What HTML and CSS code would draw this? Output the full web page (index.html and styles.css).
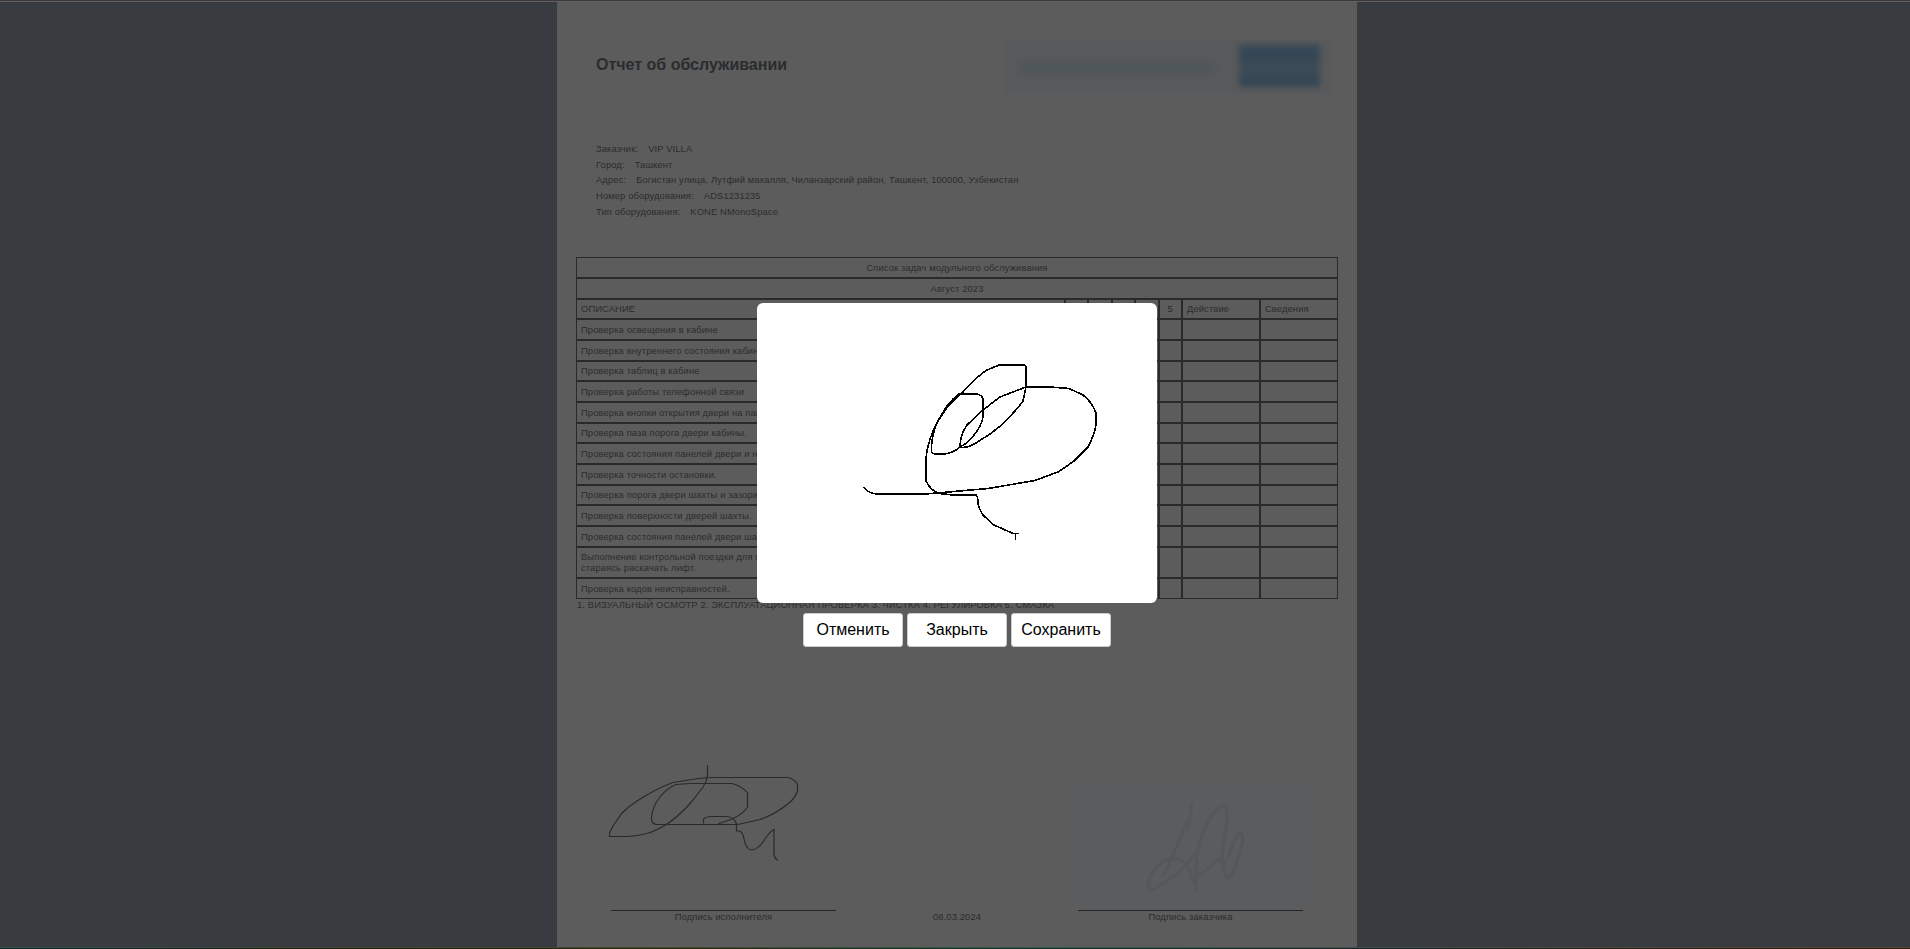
FILE: index.html
```html
<!DOCTYPE html>
<html lang="ru">
<head>
<meta charset="utf-8">
<title>Отчет об обслуживании</title>
<link rel="stylesheet" href="styles.css">
</head>
<body>
<main class="page">
  <header class="header">
    <h1 class="title">Отчет об обслуживании</h1>
    <div class="logo"><div class="logo-text"></div><div class="logo-mark"></div></div>
  </header>
  <section class="info">
    <p><span>Заказчик:</span><span>VIP VILLA</span></p>
    <p><span>Город:</span><span>Ташкент</span></p>
    <p><span>Адрес:</span><span>Богистан улица, Лутфий махалля, Чиланзарский район, Ташкент, 100000, Узбекистан</span></p>
    <p><span>Номер оборудования:</span><span>ADS1231235</span></p>
    <p><span>Тип оборудования:</span><span>KONE NMonoSpace</span></p>
  </section>
  <table class="tasks">
    <colgroup><col class="c-desc"><col class="c-n"><col class="c-n"><col class="c-n"><col class="c-n"><col class="c-n"><col class="c-act"><col class="c-act"></colgroup>
    <tr><td colspan="8" class="mid">Список задач модульного обслуживания</td></tr>
    <tr><td colspan="8" class="mid">Август 2023</td></tr>
    <tr><td>ОПИСАНИЕ</td><td class="mid">1</td><td class="mid">2</td><td class="mid">3</td><td class="mid">4</td><td class="mid">5</td><td>Действие</td><td>Сведения</td></tr>
    <tr><td>Проверка освещения в кабине</td><td></td><td></td><td></td><td></td><td></td><td></td><td></td></tr>
    <tr><td>Проверка внутреннего состояния кабины</td><td></td><td></td><td></td><td></td><td></td><td></td><td></td></tr>
    <tr><td>Проверка таблиц в кабине</td><td></td><td></td><td></td><td></td><td></td><td></td><td></td></tr>
    <tr><td>Проверка работы телефонной связи</td><td></td><td></td><td></td><td></td><td></td><td></td><td></td></tr>
    <tr><td>Проверка кнопки открытия двери на панели</td><td></td><td></td><td></td><td></td><td></td><td></td><td></td></tr>
    <tr><td>Проверка паза порога двери кабины.</td><td></td><td></td><td></td><td></td><td></td><td></td><td></td></tr>
    <tr><td>Проверка состояния панелей двери и направляющих</td><td></td><td></td><td></td><td></td><td></td><td></td><td></td></tr>
    <tr><td>Проверка точности остановки.</td><td></td><td></td><td></td><td></td><td></td><td></td><td></td></tr>
    <tr><td>Проверка порога двери шахты и зазора</td><td></td><td></td><td></td><td></td><td></td><td></td><td></td></tr>
    <tr><td>Проверка поверхности дверей шахты.</td><td></td><td></td><td></td><td></td><td></td><td></td><td></td></tr>
    <tr><td>Проверка состояния панелей двери шахты</td><td></td><td></td><td></td><td></td><td></td><td></td><td></td></tr>
    <tr class="tall"><td>Выполнение контрольной поездки для проверки<br>стараясь раскачать лифт.</td><td></td><td></td><td></td><td></td><td></td><td></td><td></td></tr>
    <tr><td>Проверка кодов неисправностей.</td><td></td><td></td><td></td><td></td><td></td><td></td><td></td></tr>
  </table>
  <p class="legend">1. ВИЗУАЛЬНЫЙ ОСМОТР 2. ЭКСПЛУАТАЦИОННАЯ ПРОВЕРКА 3. ЧИСТКА 4. РЕГУЛИРОВКА 5. СМАЗКА</p>
  <footer class="signs">
    <div class="sign">
      <svg class="sign-pic" width="225" height="120" viewBox="611 790 225 120">
        <path class="ink" d="M707.500 765V775Q707 781 703 787Q696 797 686 808Q676 818 667 824Q656 831 647 833.500Q637 836 628 836.500H609.500V833L613 826L622 813Q629 806 637 801Q657 788 673 782.500L698 778.500L712 777.500H788Q794 779 797.500 784V791Q795 798 789 803Q776 814 760 819.500L738 824.500H656Q651 823 651.500 818Q652 807 660 797Q667 788 676 784.500L690 783.500H732Q742 786 747.500 793V807Q743 814 732 819L718 824M703.500 823.500V819Q705 817 712 816.500H727Q734 817 736.500 824V831H740Q743 833 744 839Q746 849 751 850Q757 850 763 842Q769 832 774 829.500V855Q775 859 778 860.500"/>
      </svg>
      <div class="sign-label">Подпись исполнителя</div>
    </div>
    <div class="date">08.03.2024</div>
    <div class="sign">
      <svg class="sign-pic" width="225" height="120" viewBox="1078 790 225 120">
        <rect class="scan" x="1065" y="785" width="250" height="124"/>
        <path class="pencil" d="M1192 804Q1190 820 1187 832M1187 820Q1178 845 1163 877M1184 862Q1177 856 1164 861Q1149 871 1148 886Q1150 892 1156 888L1178 873Q1190 862 1195 853Q1199 861 1195 892M1184 862Q1191 869 1193 884M1195 880Q1195 835 1216 810Q1228 798 1227 820L1222 855L1225 867M1196 878L1221 858Q1224 875 1227 879Q1235 875 1243 840Q1241 825 1233 844L1228 858"/>
      </svg>
      <div class="sign-label">Подпись заказчика</div>
    </div>
  </footer>
</main>
<div class="modal">
  <svg class="pad" width="400" height="300" viewBox="757 303 400 300">
    <path class="stroke" d="M863.500 487Q868 493 875 493.700H929L988 488.500L1035 480.500L1059 471.500L1074 461L1088 447Q1094 436 1096 425V413Q1092 402 1083 395L1069 388.500L1050 387H1026L1000 397L983 410L967 425Q960 435 960 447Q968 449 979 441Q1004 427 1023 401L1026 387V367Q1025 364.700 1022 364.700H1000L987 370Q976 377 962 393L950 404Q940 416 933 431Q926 449 926 460V481Q931 491 939 493.500L953 495H976Q978 496 978 504Q980 511 983 515L993 524.500L1013 533.500H1019M1015.500 534V540M960 447Q970 442 977 431Q984 421 983 412V399Q982 395 977 394H959Q947 402 936 425Q931 439 931.500 452Q932 454 936 454H945Q953 453 960 447"/>
  </svg>
  <div class="buttons">
    <button class="btn">Отменить</button>
    <button class="btn">Закрыть</button>
    <button class="btn">Сохранить</button>
  </div>
</div>
</body>
</html>
```
FILE: styles.css
```css
* { box-sizing: border-box; }
body {
  display: flow-root;
  margin: 0;
  height: 949px;
  overflow: hidden;
  background:
    linear-gradient(#3a3839, #3a3839) 0 0 / 100% 1px no-repeat,
    linear-gradient(#656163, #656163) 0 1px / 100% 1px no-repeat,
    linear-gradient(90deg, #34504a, #454338 18%, #4a4a38 35%, #35564a 52%, #43504a 66%, #54443a 90%, #5a4638) 0 947px / 100% 1px no-repeat,
    linear-gradient(90deg, #0e2a2a, #222412 18%, #26280e 35%, #0c3424 52%, #1c2628 75%, #30200f) 0 948px / 100% 1px no-repeat,
    #383b3f;
  font-family: "Liberation Sans", Arial, sans-serif;
  color: #2a2c2e;
}
p { margin: 0; }
.page {
  width: 800px;
  height: 945px;
  margin: 2px 0 0 557px;
  background: #5c5c5c;
  font-size: 9.333px;
  line-height: 10.667px;
  letter-spacing: 0.14px;
}
.header {
  display: flex;
  justify-content: space-between;
  align-items: flex-start;
  height: 140px;
  padding: 38px 25px 0 39px;
}
.title {
  margin: 15px 0 0;
  font-size: 16px;
  line-height: 20px;
  font-weight: bold;
  letter-spacing: 0;
}
.logo {
  display: flex;
  align-items: flex-start;
  width: 328px;
  height: 54px;
  padding: 5px 12px 0 16px;
  overflow: hidden;
  background: #595a5b;
}
.logo-text {
  width: 196px;
  height: 14px;
  margin: 16px 24px 0 0;
  background: #4e565b;
  filter: blur(5px);
}
.logo-mark {
  width: 82px;
  height: 42px;
  background: linear-gradient(#344755 0 30%, #3c4b56 45% 65%, #344755 80%);
  filter: blur(3px);
}
.info {
  height: 115px;
  padding-left: 39px;
  line-height: 15.7px;
}
.info p { display: flex; gap: 10px; }
.tasks {
  width: 762px;
  margin-left: 19px;
  table-layout: fixed;
  border-collapse: separate;
  border-spacing: 0;
  border: 0;
}
.c-desc { width: 489px; }
.c-n { width: 23.4px; }
.c-act { width: 78px; }
.tasks tr { height: 21px; }
.tasks tr:nth-child(3n):not(.tall) { height: 20px; }
.tasks .tall { height: 31px; }
.tasks td {
  border: 1px solid #292a2b;
  padding: 1px 4px 0;
  vertical-align: middle;
}
.tasks .mid { text-align: center; }
.legend { margin-left: 20px; padding-top: 1px; line-height: 11px; }
.signs {
  display: flex;
  justify-content: space-between;
  width: 692px;
  margin: 179px 0 0 54px;
}
.sign { width: 225px; text-align: center; }
.sign-pic { display: block; overflow: visible; }
.sign-label { border-top: 1px solid #242526; padding-top: 1px; }
.date { margin-top: 122px; }
.ink { fill: none; stroke: #292a2b; stroke-width: 1.2; }
.scan { fill: #5b5c5e; }
.pencil { fill: none; stroke: #56575a; stroke-width: 3; stroke-linejoin: round; }
.modal {
  position: absolute;
  left: 757px;
  top: 303px;
  width: 400px;
}
.pad { display: block; background: #fff; border-radius: 6px; }
.stroke { fill: none; stroke: #000; stroke-width: 1.6; shape-rendering: crispEdges; }
.buttons {
  display: flex;
  justify-content: center;
  gap: 4px;
  margin-top: 10px;
}
.btn {
  width: 100px;
  height: 34px;
  padding: 0;
  border: 1px solid #ccc;
  border-radius: 3px;
  background: #fff;
  font: 16px "Liberation Sans", Arial, sans-serif;
  color: #000;
}
```
